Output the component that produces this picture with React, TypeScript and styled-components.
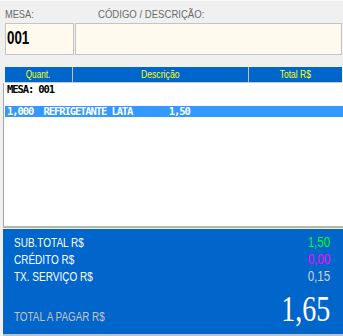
import styled, { createGlobalStyle } from "styled-components";

const GlobalStyle = createGlobalStyle`
  html, body {
    margin: 0;
    padding: 0;
    background: #f0f0f0;
  }
  #root {
    width: 343px;
    height: 336px;
    overflow: hidden;
  }
`;

// texto estreito como a fonte do sistema antigo
const Squeeze = styled.span<{ $x: number; $origin?: string }>`
  display: inline-block;
  white-space: nowrap;
  transform: scaleX(${(p) => p.$x});
  transform-origin: ${(p) => p.$origin ?? "left"} center;
`;

// tela inteira do PDV
const Screen = styled.div`
  width: 343px;
  height: 336px;
  display: flex;
  flex-direction: column;
  background: #f0f0f0;
  border-top: 1px solid #fbfbfb;
  box-sizing: border-box;
  font-family: "Liberation Sans", Arial, sans-serif;
`;

// área de entrada (mesa / código)
const EntryArea = styled.div`
  display: grid;
  grid-template-columns: 69px 268px;
  grid-template-rows: 17px 32px;
  padding: 5px 0 0 5px;
`;

const FieldLabel = styled.div<{ $indent?: number }>`
  font-size: 11px;
  line-height: 16px;
  color: #6a6a6a;
  padding-left: ${(p) => p.$indent ?? 0}px;
`;

const FieldBox = styled.div`
  background: #fff9ee;
  border: 1px solid #c4c4c4;
  box-sizing: border-box;
  height: 32px;
  padding: 4px 0 0 1px;
  font-size: 18px;
  font-weight: bold;
  color: #000;
  line-height: 20px;
  & + & {
    margin-left: 1px;
  }
`;

// grade de itens
const ItemsPanel = styled.div`
  margin: 12px 0 0 3px;
  display: flex;
  flex-direction: column;
  height: 163px;
  box-sizing: border-box;
  border-bottom: 2px solid #b4b4b4;
`;

const HeaderRow = styled.div`
  display: grid;
  grid-template-columns: 67px 176px 94px;
  height: 16px;
  margin: 0 1px 0 2px;
  box-sizing: border-box;
  border-bottom: 1px solid #c8c8c8;
`;

const HeaderCell = styled.div`
  background: #0066cc;
  color: #ffff00;
  font-size: 10px;
  line-height: 15px;
  text-align: center;
  & + & {
    border-left: 1px solid #c0c0c0;
  }
`;

const ItemList = styled.div`
  flex: 1;
  background: #fff;
  border-left: 1px solid #a8a8a8;
  padding-top: 1px;
`;

const ItemLine = styled.div<{ $selected?: boolean }>`
  height: 11px;
  margin-left: 1px;
  padding-left: 2px;
  font-family: "DejaVu Sans Mono", "Liberation Mono", monospace;
  font-weight: bold;
  font-size: 10.5px;
  line-height: 11px;
  letter-spacing: -1.1px;
  white-space: pre;
  color: ${(p) => (p.$selected ? "#ffffff" : "#000000")};
  background: ${(p) => (p.$selected ? "#3399ff" : "transparent")};
`;

// painel de totais
const TotalsPanel = styled.div`
  margin: 1px 0 0 3px;
  height: 101px;
  background: #0066cc;
  border-bottom: 2px solid #c0c0c0;
  padding: 5px 13px 0 11px;
  box-sizing: content-box;
  display: flex;
  flex-direction: column;
`;

const TotalLine = styled.div`
  display: flex;
  justify-content: space-between;
  align-items: baseline;
  height: 17px;
  line-height: 17px;
`;

const TotalLabel = styled.span<{ $dim?: boolean }>`
  font-size: 12.5px;
  color: ${(p) => (p.$dim ? "#c4c4c4" : "#ffffff")};
`;

const TotalValue = styled.span<{ $color: string }>`
  font-size: 14px;
  color: ${(p) => p.$color};
`;

const GrandLine = styled.div`
  display: flex;
  justify-content: space-between;
  align-items: baseline;
  margin-top: 7px;
`;

const GrandValue = styled.span`
  font-family: "Liberation Serif", "Times New Roman", serif;
  font-size: 35px;
  line-height: 35px;
  color: #ffffff;
`;

const totals = [
  { label: "SUB.TOTAL R$", value: "1,50", color: "#00ff00" },
  { label: "CRÉDITO R$", value: "0,00", color: "#ff00ff" },
  { label: "TX. SERVIÇO R$", value: "0,15", color: "#d4d4d4" },
];

export default function App() {
  return (
    <>
      <GlobalStyle />
      <Screen>
        <EntryArea>
          <FieldLabel>
            <Squeeze $x={0.84}>MESA:</Squeeze>
          </FieldLabel>
          <FieldLabel $indent={24}>
            <Squeeze $x={0.87}>CÓDIGO / DESCRIÇÃO:</Squeeze>
          </FieldLabel>
          <FieldBox>
            <Squeeze $x={0.74}>001</Squeeze>
          </FieldBox>
          <FieldBox />
        </EntryArea>

        <ItemsPanel>
          <HeaderRow>
            <HeaderCell>
              <Squeeze $x={0.82} $origin="center">Quant.</Squeeze>
            </HeaderCell>
            <HeaderCell>
              <Squeeze $x={0.87} $origin="center">Descrição</Squeeze>
            </HeaderCell>
            <HeaderCell>
              <Squeeze $x={0.85} $origin="center">Total R$</Squeeze>
            </HeaderCell>
          </HeaderRow>
          <ItemList>
            <ItemLine>MESA: 001</ItemLine>
            <ItemLine> </ItemLine>
            <ItemLine $selected>{"1,000  REFRIGETANTE LATA       1,50"}</ItemLine>
          </ItemList>
        </ItemsPanel>

        <TotalsPanel>
          {totals.map((t) => (
            <TotalLine key={t.label}>
              <TotalLabel>
                <Squeeze $x={0.8}>{t.label}</Squeeze>
              </TotalLabel>
              <TotalValue $color={t.color}>
                <Squeeze $x={0.83} $origin="right">{t.value}</Squeeze>
              </TotalValue>
            </TotalLine>
          ))}
          <GrandLine>
            <TotalLabel $dim>
              <Squeeze $x={0.79}>TOTAL A PAGAR R$</Squeeze>
            </TotalLabel>
            <GrandValue>
              <Squeeze $x={0.8} $origin="right">1,65</Squeeze>
            </GrandValue>
          </GrandLine>
        </TotalsPanel>
      </Screen>
    </>
  );
}
